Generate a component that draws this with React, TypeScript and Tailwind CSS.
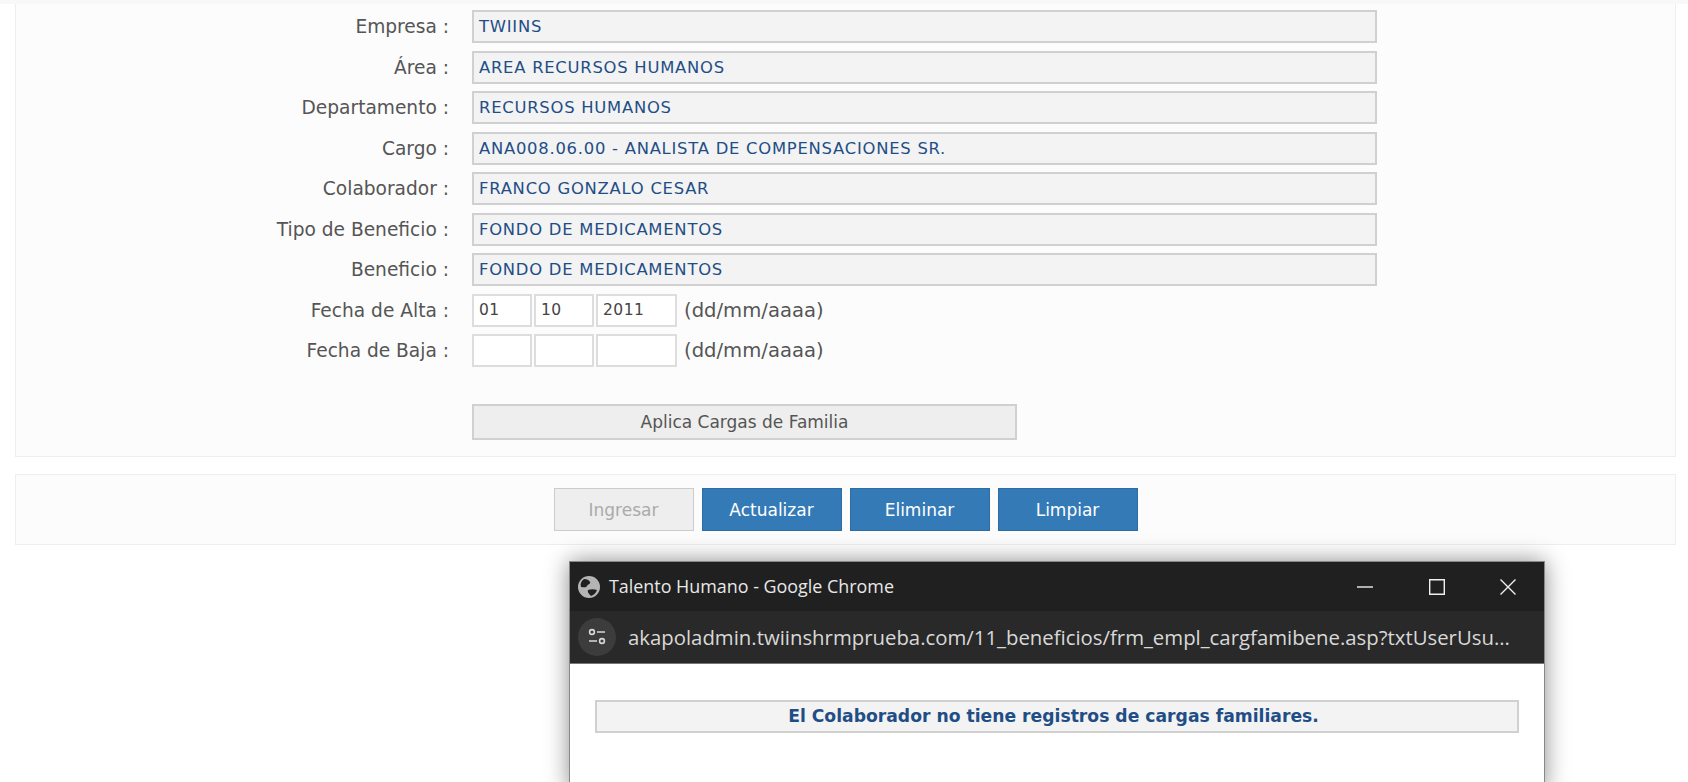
import React from "react";

const BODY_FONT = "font-['DejaVu_Sans',sans-serif]";

const fields = [
  { label: "Empresa :", value: "TWIINS" },
  { label: "Área :", value: "AREA RECURSOS HUMANOS" },
  { label: "Departamento :", value: "RECURSOS HUMANOS" },
  { label: "Cargo :", value: "ANA008.06.00 - ANALISTA DE COMPENSACIONES SR." },
  { label: "Colaborador :", value: "FRANCO GONZALO CESAR" },
  { label: "Tipo de Beneficio :", value: "FONDO DE MEDICAMENTOS" },
  { label: "Beneficio :", value: "FONDO DE MEDICAMENTOS" },
];

const FormRow = ({ label, children }: { label: string; children: React.ReactNode }) => (
  <div className="flex h-[33px] items-center">
    <div className="w-[434px] pr-px pt-[1px] text-right text-[18.6px] text-[#555]">{label}</div>
    <div className="ml-[22px] flex h-full items-center">{children}</div>
  </div>
);

const DateBox = ({ value, width }: { value?: string; width: string }) => (
  <div className={`flex h-[33px] items-center border-2 border-[#ddd] bg-white pl-[5px] pt-[2px] text-[15.5px] tracking-[0.5px] text-[#444] ${width}`}>
    {value}
  </div>
);

const DateRow = ({ label, day, month, year }: { label: string; day?: string; month?: string; year?: string }) => (
  <FormRow label={label}>
    <div className="flex gap-[2px]">
      <DateBox value={day} width="w-[60px]" />
      <DateBox value={month} width="w-[60px]" />
      <DateBox value={year} width="w-[81px]" />
    </div>
    <span className="ml-[7px] pt-[1px] text-[19.6px] text-[#555]">(dd/mm/aaaa)</span>
  </FormRow>
);

const ActionButton = ({ children, disabled }: { children: string; disabled?: boolean }) => (
  <button
    className={
      disabled
        ? "h-[43px] w-[140px] border-[1.5px] border-[#ccc] bg-[#eee] pt-[2px] text-[17px] text-[#aaa]"
        : "h-[43px] w-[140px] border border-[#2e6da4] bg-[#337ab7] pt-[2px] text-[17px] text-white"
    }
  >
    {children}
  </button>
);

const Popup = () => (
  <div className="absolute left-[569px] top-[561px] h-[230px] w-[976px] border-x border-t border-[#888] bg-white shadow-[0_0_22px_rgba(0,0,0,0.45)]">
    <div className="flex h-[49px] items-center bg-[#202020] pl-[8px] font-['Open_Sans',sans-serif] text-[17.9px] text-[#e8e8e8]">
      <svg viewBox="0 0 22 22" className="h-[22px] w-[22px]">
        <circle cx="11" cy="11" r="11" fill="#b4b4b4" />
        <path d="M6 3c3 0 5 1 6 3s-2 2-3 4-3 1-6 1c-1-3 0-6 3-8zM10 14c3-1 6-1 9 0-1 3-3 5-6 6-2-2-4-4-3-6z" fill="#202020" />
      </svg>
      <span className="ml-[9px]">Talento Humano - Google Chrome</span>
      <div className="ml-auto flex items-center">
        <svg viewBox="0 0 16 16" className="h-[16px] w-[16px]" fill="none" stroke="#f0f0f0" strokeWidth="1.4">
          <path d="M0 8h16" />
        </svg>
        <svg viewBox="0 0 16 16" className="ml-[56px] h-[16px] w-[16px]" fill="none" stroke="#f0f0f0" strokeWidth="1.4">
          <path d="M.7.7h14.6v14.6H.7z" />
        </svg>
        <svg viewBox="0 0 16 16" className="ml-[55px] mr-[28px] h-[16px] w-[16px]" fill="none" stroke="#f0f0f0" strokeWidth="1.4">
          <path d="M.5.5l15 15M15.500.5l-15 15" />
        </svg>
      </div>
    </div>
    <div className="flex h-[53px] items-center border-b border-[#777] bg-[#292929] pl-[8px] font-['Open_Sans',sans-serif] text-[20.35px] text-[#d8d8d8]">
      <div className="flex h-[38px] w-[38px] items-center justify-center rounded-full bg-[#3c3c3c]">
        <svg viewBox="0 0 20 20" className="h-[20px] w-[20px]" fill="none" stroke="#d8d8d8" strokeWidth="1.6">
          <circle cx="5" cy="5" r="2.4" />
          <path d="M10 5h8M2 14h8" />
          <circle cx="15" cy="14" r="2.4" />
        </svg>
      </div>
      <span className="ml-[12px] whitespace-nowrap">akapoladmin.twiinshrmprueba.com/11_beneficios/frm_empl_cargfamibene.asp?txtUserUsu...</span>
    </div>
    <div className="mx-[25px] mt-[36px] flex h-[33px] items-center justify-center border-2 border-[#d0d0d0] bg-[#f3f3f3] pr-[7px] text-[17.2px] font-bold text-[#1f4e86]">
      El Colaborador no tiene registros de cargas familiares.
    </div>
  </div>
);

export default function App() {
  return (
    <div className={`relative h-[782px] overflow-hidden bg-white ${BODY_FONT}`}>
      <div className="h-[4px] bg-[#f8f8f8]" />
      <div className="ml-[15px] mr-[12px] h-[453px] border-x border-b border-[#eee] bg-[#fcfcfc] pt-[6px]">
        <div className="flex flex-col gap-[7.5px]">
          {fields.map((field) => (
            <FormRow key={field.label} label={field.label}>
              <div className="flex h-[33px] w-[905px] items-center border-2 border-[#d0d0d0] bg-[#f3f3f3] pl-[5px] pt-[2px] text-[16.4px] tracking-[0.75px] text-[#1f4e86]">
                {field.value}
              </div>
            </FormRow>
          ))}
          <DateRow label="Fecha de Alta :" day="01" month="10" year="2011" />
          <DateRow label="Fecha de Baja :" />
        </div>
        <button className="ml-[456px] mt-[37px] h-[36px] w-[545px] border-2 border-[#d0d0d0] bg-[#eee] pt-[1px] text-[17px] text-[#555]">
          Aplica Cargas de Familia
        </button>
      </div>
      <div className="ml-[15px] mr-[12px] mt-[17px] flex h-[71px] items-center justify-center gap-[8px] border border-[#eee] bg-[#fcfcfc]">
        <ActionButton disabled>Ingresar</ActionButton>
        <ActionButton>Actualizar</ActionButton>
        <ActionButton>Eliminar</ActionButton>
        <ActionButton>Limpiar</ActionButton>
      </div>
      <Popup />
    </div>
  );
}
